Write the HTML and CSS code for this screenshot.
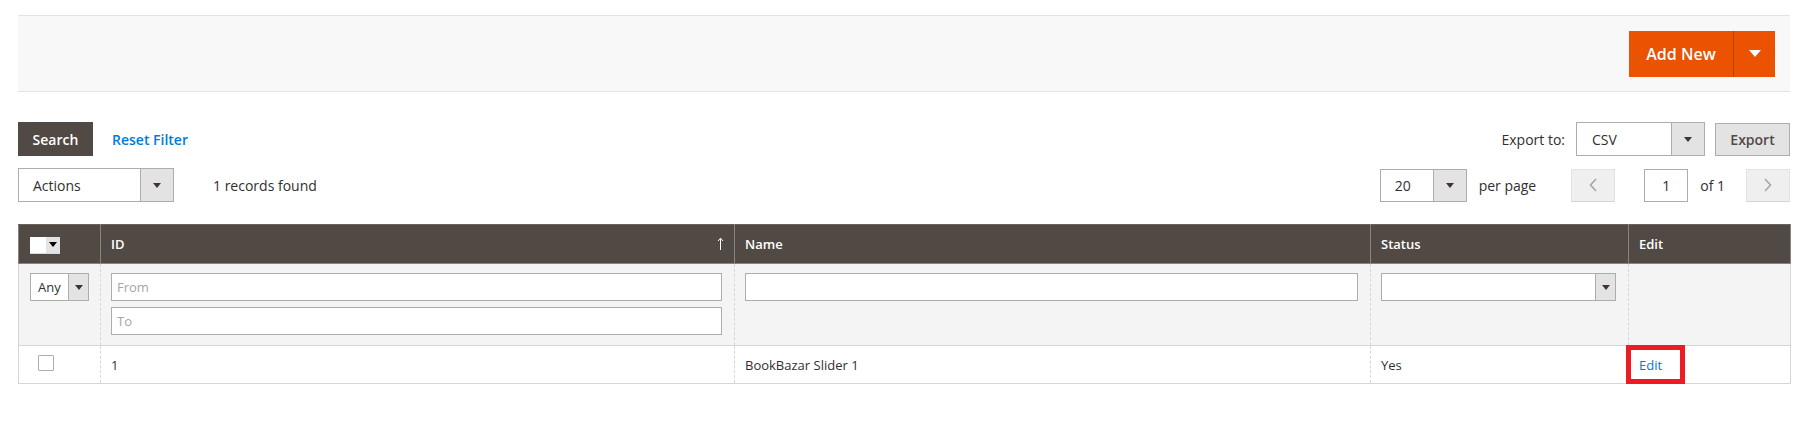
FILE: index.html
```html
<!DOCTYPE html>
<html lang="en">
<head>
<meta charset="utf-8">
<title>Sliders</title>
<link rel="stylesheet" href="styles.css">
</head>
<body>
<div class="page">
  <div class="page-actions">
    <div class="split-button">
      <button class="add-new" type="button">Add New</button>
      <button class="add-toggle" type="button" aria-label="More"><svg width="12" height="8" viewBox="0 0 12 8"><polygon points="0,0 12,0 6,7" fill="#fff"/></svg></button>
    </div>
  </div>

  <div class="toolbar">
    <div class="toolbar-row">
      <div class="tb-left">
        <button class="btn-search" type="button">Search</button>
        <a class="reset-link" href="#">Reset Filter</a>
      </div>
      <div class="tb-right">
        <span class="label-text">Export to:</span>
        <div class="select sel-export">
          <span class="sel-label">CSV</span>
          <span class="sel-arrow"><svg width="8" height="5" viewBox="0 0 8 5"><polygon points="0,0 8,0 4,5" fill="#41362f"/></svg></span>
        </div>
        <button class="btn-export" type="button">Export</button>
      </div>
    </div>
    <div class="toolbar-row row-two">
      <div class="tb-left">
        <div class="select sel-actions">
          <span class="sel-label">Actions</span>
          <span class="sel-arrow"><svg width="8" height="5" viewBox="0 0 8 5"><polygon points="0,0 8,0 4,5" fill="#41362f"/></svg></span>
        </div>
        <span class="records">1 records found</span>
      </div>
      <div class="tb-right">
        <div class="select sel-limit">
          <span class="sel-label">20</span>
          <span class="sel-arrow"><svg width="8" height="5" viewBox="0 0 8 5"><polygon points="0,0 8,0 4,5" fill="#41362f"/></svg></span>
        </div>
        <span class="per-page">per page</span>
        <button class="pager-btn pager-prev" type="button" aria-label="Previous"><svg width="8" height="14" viewBox="0 0 8 14"><polyline points="7,1 1.5,7 7,13" fill="none" stroke="#a6a6a6" stroke-width="1.6"/></svg></button>
        <span class="page-input">1</span>
        <span class="of-pages">of 1</span>
        <button class="pager-btn pager-next" type="button" aria-label="Next"><svg width="8" height="14" viewBox="0 0 8 14"><polyline points="1,1 6.5,7 1,13" fill="none" stroke="#a6a6a6" stroke-width="1.6"/></svg></button>
      </div>
    </div>
  </div>

  <table class="grid">
    <colgroup>
      <col class="c-mass">
      <col class="c-id">
      <col class="c-name">
      <col class="c-status">
      <col class="c-edit">
    </colgroup>
    <thead>
      <tr class="head-row">
        <th class="th-mass">
          <span class="mass-select"><span class="mass-box"></span><span class="mass-arrow"><svg width="8" height="5" viewBox="0 0 8 5"><polygon points="0,0 8,0 4,5" fill="#000"/></svg></span></span>
        </th>
        <th><div class="th-sort"><span>ID</span><svg class="sort-arrow" width="7" height="13" viewBox="0 0 7 13"><line x1="3.5" y1="1.5" x2="3.5" y2="13" stroke="#fff" stroke-width="1"/><polyline points="1,4 3.5,1.2 6,4" fill="none" stroke="#fff" stroke-width="1"/></svg></div></th>
        <th>Name</th>
        <th>Status</th>
        <th>Edit</th>
      </tr>
      <tr class="filter-row">
        <td class="f-mass">
          <div class="select sel-any">
            <span class="sel-label">Any</span>
            <span class="sel-arrow"><svg width="8" height="5" viewBox="0 0 8 5"><polygon points="0,0 8,0 4,5" fill="#41362f"/></svg></span>
          </div>
        </td>
        <td>
          <div class="f-input placeholder">From</div>
          <div class="f-input placeholder second">To</div>
        </td>
        <td><div class="f-input"></div></td>
        <td>
          <div class="select sel-status">
            <span class="sel-label"></span>
            <span class="sel-arrow"><svg width="8" height="5" viewBox="0 0 8 5"><polygon points="0,0 8,0 4,5" fill="#41362f"/></svg></span>
          </div>
        </td>
        <td></td>
      </tr>
    </thead>
    <tbody>
      <tr class="data-row">
        <td class="d-mass"><span class="checkbox"></span></td>
        <td>1</td>
        <td>BookBazar Slider 1</td>
        <td>Yes</td>
        <td class="d-edit"><a class="edit-link" href="#">Edit</a><span class="highlight-box"></span></td>
      </tr>
    </tbody>
  </table>
</div>
</body>
</html>
```

FILE: styles.css
```css
* { box-sizing: border-box; }

body {
  margin: 0;
  background: #fff;
  color: #303030;
  font-family: "Open Sans", "Liberation Sans", Arial, sans-serif;
  font-size: 14px;
}

button {
  font-family: inherit;
  cursor: pointer;
}

.page {
  padding: 15px 17px 0 18px;
}

/* ---------- page actions panel ---------- */
.page-actions {
  display: flex;
  justify-content: flex-end;
  background: #f8f8f8;
  border-top: 1px solid #e3e3e3;
  border-bottom: 1px solid #e3e3e3;
  padding: 15px 15px 14px;
}

.split-button {
  display: flex;
  height: 46px;
}

.add-new {
  width: 104px;
  border: none;
  background: #eb5202;
  color: #fff;
  font-size: 16px;
  font-weight: 600;
  padding: 0;
  text-shadow: 0 0 1px rgba(0,0,0,0.15);
}

.add-toggle {
  width: 42px;
  border: none;
  border-left: 1px solid #b84002;
  background: #eb5202;
  padding: 0;
  display: flex;
  align-items: center;
  justify-content: center;
}

/* ---------- toolbar ---------- */
.toolbar {
  margin-top: 30px;
}

.toolbar-row {
  display: flex;
  justify-content: space-between;
  align-items: center;
  height: 34px;
}

.row-two {
  margin-top: 12px;
}

.tb-left,
.tb-right {
  display: flex;
  align-items: center;
}

.btn-search {
  height: 34px;
  width: 75px;
  border: none;
  background: #514943;
  color: #fff;
  font-size: 14px;
  font-weight: 600;
  padding: 0;
}

.reset-link {
  margin-left: 19px;
  color: #007bdb;
  font-weight: 600;
  text-decoration: none;
}

.label-text {
  margin-right: 11px;
}

.select {
  display: flex;
  height: 34px;
  border: 1px solid #adadad;
  background: #fff;
}

.sel-label {
  flex: 1;
  display: flex;
  align-items: center;
  padding-left: 14px;
  color: #303030;
}

.sel-arrow {
  width: 33px;
  background: #e3e3e3;
  border-left: 1px solid #adadad;
  display: flex;
  align-items: center;
  justify-content: center;
}

.sel-export {
  width: 129px;
}

.sel-export .sel-label {
  padding-left: 15px;
}

.btn-export {
  margin-left: 10px;
  width: 75px;
  height: 33px;
  border: 1px solid #adadad;
  background: #e3e3e3;
  color: #514943;
  font-size: 14px;
  font-weight: 600;
  padding: 0;
}

.sel-actions {
  width: 156px;
}

.records {
  margin-left: 39px;
}

.sel-limit {
  width: 87px;
  height: 33px;
}

.per-page {
  margin-left: 12px;
}

.pager-btn {
  width: 44px;
  height: 33px;
  background: #efefef;
  border: 1px solid #e3e3e3;
  border-bottom-color: #d4d4d4;
  padding: 0;
  display: flex;
  align-items: center;
  justify-content: center;
}

.pager-prev {
  margin-left: 35px;
}

.page-input {
  margin-left: 29px;
  width: 44px;
  height: 33px;
  border: 1px solid #adadad;
  display: flex;
  align-items: center;
  justify-content: center;
}

.of-pages {
  margin-left: 12px;
}

.pager-next {
  margin-left: 21px;
}

/* ---------- grid ---------- */
.grid {
  margin-top: 22px;
  width: 100%;
  border-collapse: collapse;
  table-layout: fixed;
}

.c-mass { width: 82px; }
.c-id { width: 634px; }
.c-name { width: 636px; }
.c-status { width: 258px; }
.c-edit { width: 162px; }

.head-row th {
  height: 39px;
  background: #514943;
  color: #fff;
  font-size: 13px;
  font-weight: 600;
  text-align: left;
  padding: 0 10px;
  border: 1px solid #8a837f;
  border-top-color: #6b625c;
}

.head-row th.th-mass {
  padding-left: 11px;
}

.th-sort {
  display: flex;
  align-items: center;
  justify-content: space-between;
  padding-right: 0;
}

.sort-arrow {
  margin-top: -2px;
}

.mass-select {
  display: inline-flex;
  vertical-align: middle;
  border-bottom: 1px solid #d9d9d9;
}

.mass-box {
  width: 16px;
  height: 16px;
  background: #fff;
}

.mass-arrow {
  width: 14px;
  height: 16px;
  background: #e3e3e3;
  display: flex;
  align-items: center;
  justify-content: center;
}

.filter-row td {
  background: #f4f4f4;
  vertical-align: top;
  padding: 9px 12px 10px 10px;
  border-left: 1px dashed #d6d6d6;
  border-right: 1px dashed #d6d6d6;
  border-bottom: 1px solid #d6d6d6;
}

.filter-row td:first-child,
.data-row td:first-child {
  border-left: 1px solid #d6d6d6;
}

.filter-row td:last-child,
.data-row td:last-child {
  border-right: 1px solid #d6d6d6;
}

.filter-row td.f-mass {
  padding-left: 11px;
}

.sel-any {
  width: 59px;
  height: 28px;
  font-size: 13px;
}

.sel-any .sel-label {
  padding-left: 7px;
}

.sel-any .sel-arrow,
.sel-status .sel-arrow {
  width: 20px;
}

.sel-status {
  height: 28px;
  width: 100%;
}

.f-input {
  height: 28px;
  border: 1px solid #adadad;
  background: #fff;
  font-size: 13px;
  display: flex;
  align-items: center;
  padding-left: 5px;
}

.f-input.second {
  margin-top: 6px;
}

.placeholder {
  color: #a6a6a6;
}

.data-row td {
  height: 38px;
  padding: 0 10px;
  font-size: 13px;
  color: #303030;
  vertical-align: middle;
  border-left: 1px dashed #d6d6d6;
  border-right: 1px dashed #d6d6d6;
  border-bottom: 1px solid #d6d6d6;
}

.data-row td.d-mass {
  vertical-align: top;
  padding: 9px 0 0 19px;
}

.checkbox {
  display: block;
  width: 16px;
  height: 16px;
  border: 1px solid #adadad;
  border-radius: 1px;
  background: #fff;
}

.d-edit {
  position: relative;
}

.edit-link {
  color: #007bdb;
  text-decoration: none;
}

.highlight-box {
  position: absolute;
  left: -3px;
  top: -1px;
  width: 59px;
  height: 39px;
  border: 5px solid #ed1c24;
}
```
